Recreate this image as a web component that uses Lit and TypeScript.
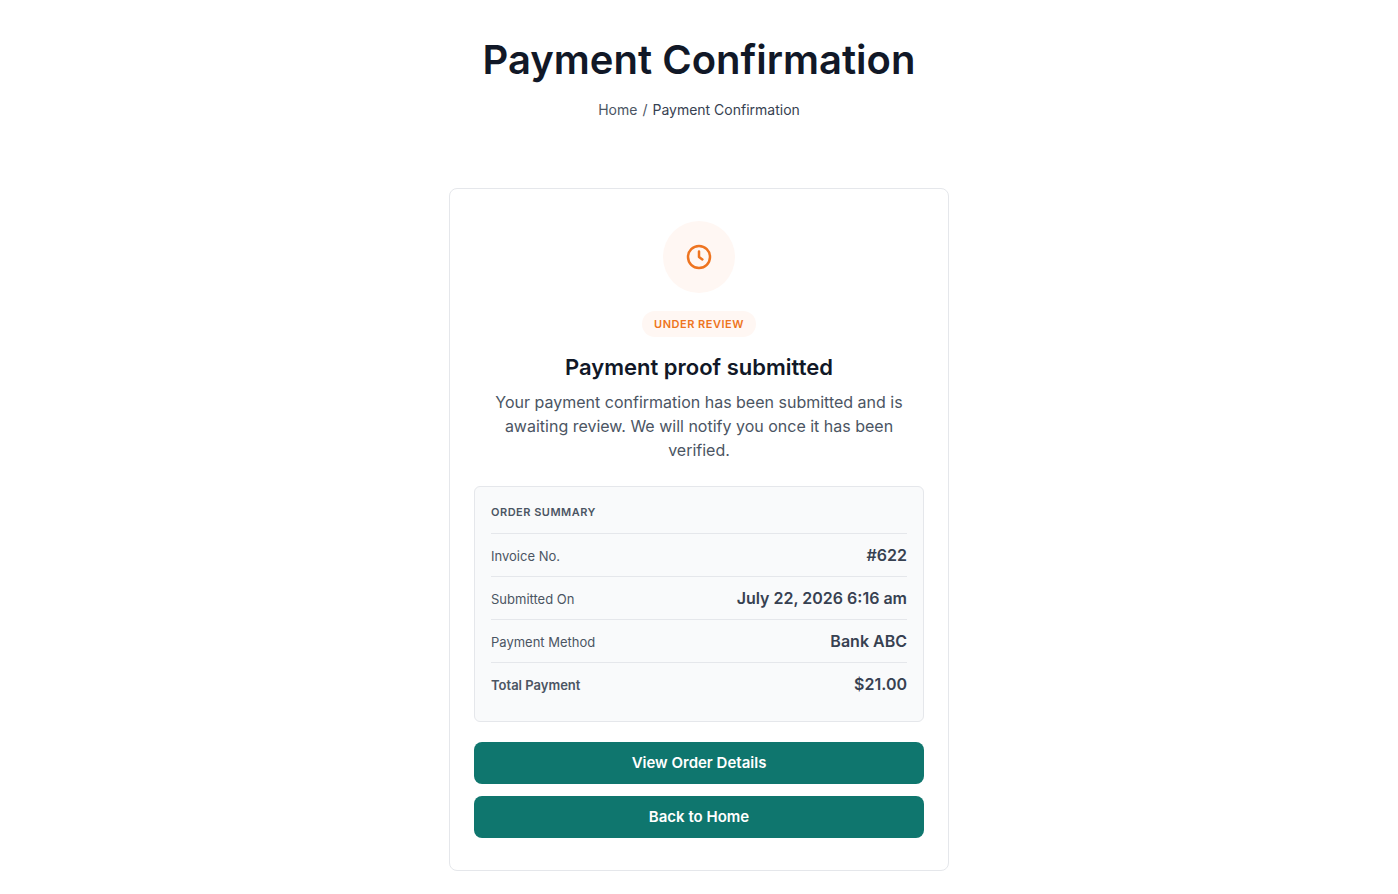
import { LitElement, html, css } from "lit";
import { customElement } from "lit/decorators.js";

interface SummaryRow {
  label: string;
  value: string;
  total?: boolean;
}

const rows: SummaryRow[] = [
  { label: "Invoice No.", value: "#622" },
  { label: "Submitted On", value: "July 22, 2026 6:16 am" },
  { label: "Payment Method", value: "Bank ABC" },
  { label: "Total Payment", value: "$21.00", total: true },
];

@customElement("app-root")
export class AppRoot extends LitElement {
  static styles = css`
    :host {
      display: block;
      font-family: Inter, sans-serif;
      font-size: 16px;
      line-height: 24px;
      color: #4b5563;
      background: #ffffff;
    }
    * {
      box-sizing: border-box;
    }
    h1, h2, h3, p, dl, dd, ol {
      margin: 0;
      padding: 0;
    }
    .page-header {
      padding: 36px 24px 0;
      text-align: center;
    }
    .page-title {
      font-size: 40px;
      line-height: 48px;
      font-weight: 600;
      color: #111827;
    }
    .crumbs {
      display: flex;
      justify-content: center;
      gap: 5px;
      margin-top: 16px;
      font-size: 14px;
      line-height: 20px;
      list-style: none;
    }
    .crumbs a {
      color: #4b5563;
      text-decoration: none;
    }
    .crumbs .current {
      color: #374151;
    }
    .card {
      max-width: 500px;
      margin: 68px auto 24px;
      padding: 32px 24px;
      border: 1px solid #e5e7eb;
      border-radius: 8px;
      display: flex;
      flex-direction: column;
      align-items: center;
      text-align: center;
    }
    .status-icon {
      display: flex;
      align-items: center;
      justify-content: center;
      width: 72px;
      height: 72px;
      border-radius: 50%;
      background: #fff7f3;
      color: #ee7420;
    }
    .badge {
      margin-top: 18px;
      padding: 4px 12px;
      border-radius: 999px;
      background: #fff7f3;
      color: #ee7420;
      font-size: 11px;
      line-height: 18px;
      font-weight: 600;
      letter-spacing: 0.5px;
      text-transform: uppercase;
    }
    .card-title {
      margin-top: 16px;
      font-size: 22px;
      line-height: 28px;
      font-weight: 600;
      color: #111827;
    }
    .message {
      margin-top: 9px;
    }
    .summary {
      align-self: stretch;
      margin-top: 24px;
      padding: 16px;
      border: 1px solid #e5e7eb;
      border-radius: 6px;
      background: #f9fafb;
      text-align: left;
    }
    .summary-title {
      padding-bottom: 12px;
      font-size: 11px;
      line-height: 18px;
      font-weight: 600;
      letter-spacing: 0.5px;
      text-transform: uppercase;
    }
    .row {
      display: flex;
      align-items: baseline;
      justify-content: space-between;
      padding: 9px 0;
      border-top: 1px solid #e5e7eb;
    }
    .row dt {
      font-size: 13px;
      line-height: 20px;
    }
    .row dd {
      font-weight: 600;
      color: #374151;
    }
    .row.total dt {
      font-weight: 600;
    }
    .actions {
      align-self: stretch;
      display: flex;
      flex-direction: column;
      gap: 12px;
      margin-top: 20px;
    }
    .button {
      padding: 9px 16px;
      border-radius: 8px;
      background: #0f766e;
      color: #ffffff;
      font-size: 15px;
      font-weight: 600;
      text-align: center;
      text-decoration: none;
    }
  `;

  render() {
    return html`
      <header class="page-header">
        <h1 class="page-title">Payment Confirmation</h1>
        <nav aria-label="Breadcrumb">
          <ol class="crumbs">
            <li><a href="#">Home</a></li>
            <li aria-hidden="true">/</li>
            <li class="current" aria-current="page">Payment Confirmation</li>
          </ol>
        </nav>
      </header>
      <main class="card">
        <div class="status-icon">
          <svg width="28" height="28" viewBox="0 0 28 28" fill="none" stroke="currentColor" stroke-width="2.5" stroke-linecap="round" stroke-linejoin="round" aria-hidden="true">
            <circle cx="14" cy="14" r="11"></circle>
            <polyline points="14 8.6 14 14 17.4 16.4"></polyline>
          </svg>
        </div>
        <span class="badge">Under Review</span>
        <h2 class="card-title">Payment proof submitted</h2>
        <p class="message">
          Your payment confirmation has been submitted and is awaiting review. We will notify you once it has been verified.
        </p>
        <section class="summary">
          <h3 class="summary-title">Order Summary</h3>
          <dl>
            ${rows.map(
              (row) => html`<div class="row ${row.total ? "total" : ""}">
                <dt>${row.label}</dt>
                <dd>${row.value}</dd>
              </div>`
            )}
          </dl>
        </section>
        <div class="actions">
          <a class="button" href="#">View Order Details</a>
          <a class="button" href="#">Back to Home</a>
        </div>
      </main>
    `;
  }
}
